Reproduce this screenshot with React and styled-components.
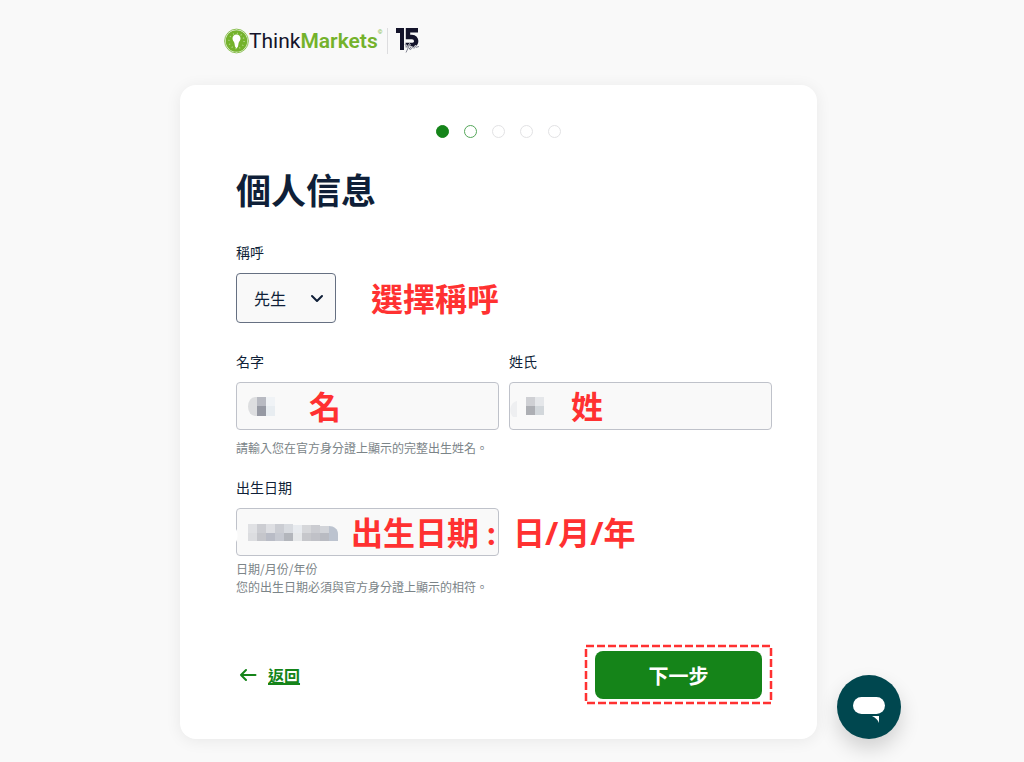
import React, {useState} from "react";

import styled, {createGlobalStyle} from "styled-components";

const colors = {
    page: "#f9f9f9",
    ink: "#0f1f38",
    muted: "#7b8488",
    green: "#158419",
    note: "#ff3131",
    chat: "#00474f",
};

const GlobalStyle = createGlobalStyle`
    * {
        box-sizing: border-box;
    }
    body {
        margin: 0;
        background: ${colors.page};
        color: ${colors.ink};
        font-family: "Noto Sans CJK TC", "Noto Sans", sans-serif;
    }
    input, select, button {
        font-family: inherit;
        color: inherit;
    }
`;

const Page = styled.div`
    padding: 0 27px 23px 0;
`;

const Column = styled.div`
    width: 100%;
    max-width: 637px;
    margin: 0 auto;
`;

const Header = styled.header`
    display: flex;
    align-items: center;
    height: 85px;
    padding: 0 44px 4px;
`;

const Brand = styled.a`
    display: flex;
    align-items: center;
    color: #14142b;
    font-family: Roboto, "Liberation Sans", sans-serif;
    font-size: 21px;
    font-weight: 400;
    line-height: 24px;
    text-decoration: none;
`;

const BrandAccent = styled.span`
    color: #74b22c;
    font-weight: 600;
`;

const BrandMark = styled.svg`
    width: 25px;
    height: 26px;
`;

const Registered = styled.sup`
    align-self: flex-start;
    color: #74b22c;
    font-size: 6px;
    line-height: 8px;
`;

const Anniversary = styled.svg`
    width: 24px;
    height: 28px;
    margin-left: 8px;
`;

const HeaderDivider = styled.span`
    width: 1px;
    height: 26px;
    margin-left: 5px;
    background: #dddddf;
`;

const Card = styled.main`
    padding: 40px 45px 35px 56px;
    border-radius: 16px;
    background: #ffffff;
    box-shadow: 0 2px 16px rgba(0, 0, 0, 0.07);
`;

const Steps = styled.ol`
    display: flex;
    justify-content: center;
    gap: 15px;
    margin: 0 11px 27px 0;
    padding: 0;
    list-style: none;
`;

const stepColors = {
    done: colors.green,
    current: "#55a75a",
    todo: "#e2e2e4",
};

const Step = styled.li`
    width: 13px;
    height: 13px;
    border: 1px solid ${({$state}) => stepColors[$state]};
    border-radius: 50%;
    background: ${({$state}) => ($state === "done" ? colors.green : "none")};
`;

const Title = styled.h1`
    margin: 0 0 29px;
    font-size: 35px;
    font-weight: 700;
    line-height: 48px;
`;

const Field = styled.div`
    min-width: 0;
`;

const FieldGrid = styled.div`
    display: grid;
    grid-template-columns: 1fr 1fr;
    gap: 10px;
    margin-top: ${({$top}) => $top}px;
`;

const Label = styled.label`
    display: block;
    margin-bottom: 11px;
    font-size: 14px;
    line-height: 20px;
`;

const SelectRow = styled.div`
    display: flex;
    align-items: center;
    gap: 35px;
`;

const SelectBox = styled.div`
    position: relative;
    width: 100px;
`;

const Select = styled.select`
    appearance: none;
    width: 100%;
    height: 50px;
    padding: 0 17px;
    border: 1px solid #667082;
    border-radius: 4px;
    background: ${colors.page};
    font-size: 16px;
`;

const Chevron = styled.svg`
    position: absolute;
    top: 19px;
    right: 12px;
    width: 14px;
    height: 12px;
    pointer-events: none;
`;

const InputBox = styled.div`
    position: relative;
`;

const Input = styled.input`
    display: block;
    width: 100%;
    height: 48px;
    padding: 0 12px;
    border: 1px solid #bfc2ca;
    border-radius: 4px;
    background: ${colors.page};
    font-size: 16px;
`;

const Note = styled.span`
    padding-top: 2px;
    color: ${colors.note};
    font-family: "Noto Sans", "Noto Sans CJK TC", sans-serif;
    font-size: 32px;
    font-weight: 700;
    line-height: 46px;
    white-space: nowrap;
`;

const OverlayNote = styled(Note)`
    position: absolute;
    top: 0;
    left: ${({$left}) => $left}px;
    pointer-events: none;
`;

const NoteColon = styled.span`
    display: inline-block;
    width: 34px;
    padding-left: 7px;
    font-family: Inter, sans-serif;
`;

const Mosaic = styled.svg`
    position: absolute;
    top: 15px;
    left: 0;
    height: 20px;
    width: 110px;
    pointer-events: none;
`;

const Hint = styled.p`
    margin: ${({$top}) => $top}px 0 0;
    color: ${colors.muted};
    font-size: 12px;
    line-height: 18px;
`;

const Actions = styled.div`
    display: flex;
    align-items: center;
    justify-content: space-between;
    margin-top: 49px;
`;

const BackLink = styled.a`
    display: flex;
    align-items: center;
    gap: 11px;
    padding-left: 3px;
    color: ${colors.green};
    font-size: 16px;
    font-weight: 700;
    line-height: 24px;
    text-decoration: none;
`;

const BackText = styled.span`
    text-decoration: underline;
    text-decoration-thickness: 2px;
    text-underline-offset: 1px;
`;

const NextFrame = styled.div`
    position: relative;
    padding: 6px 10px 5px;
`;

const DashedFrame = styled.svg`
    position: absolute;
    inset: 0;
    width: 100%;
    height: 100%;
    overflow: visible;
    pointer-events: none;
`;

const NextButton = styled.button`
    display: block;
    width: 167px;
    height: 48px;
    padding: 0;
    border: 0;
    border-radius: 8px;
    background: ${colors.green};
    color: #ffffff;
    font-size: 20px;
    font-weight: 700;
    cursor: pointer;
`;

const ChatButton = styled.button`
    position: fixed;
    right: 123px;
    bottom: 23px;
    width: 64px;
    height: 64px;
    padding: 0;
    border: 0;
    border-radius: 50%;
    background: ${colors.chat};
    box-shadow: 0 10px 20px rgba(0, 0, 0, 0.16);
    cursor: pointer;
`;

const steps = ["done", "current", "todo", "todo", "todo"];

// [x, y, width, height, colour]
const firstNameTiles = [
    [21, 0, 9, 9, "#b8bac2"],
    [21, 9, 9, 10, "#9699a3"],
    [30, 0, 9, 9, "#f0f3f6"],
    [30, 9, 9, 10, "#e8edf1"],
];

const lastNameTiles = [
    [17, 0, 9, 9, "#cfd0d4"],
    [17, 9, 9, 9, "#adafb4"],
    [26, 0, 9, 9, "#e5e7ea"],
    [26, 9, 9, 9, "#d2d7db"],
];

const birthDateTiles = [
    [12, 1, 9, 9, "#e0e1e4"],
    [12, 10, 9, 8, "#dcdde0"],
    [21, 1, 9, 9, "#cccdd2"],
    [21, 10, 9, 8, "#c5c6cb"],
    [30, 1, 9, 9, "#dedfe3"],
    [30, 10, 9, 8, "#b9bcc6"],
    [39, 1, 9, 9, "#cbcdd3"],
    [39, 10, 9, 8, "#c6c9d1"],
    [48, 1, 9, 9, "#d8dbe0"],
    [48, 10, 9, 8, "#b3b6bc"],
    [57, 2, 9, 8, "#e8ebef"],
    [57, 10, 9, 8, "#e6e8ea"],
    [66, 2, 9, 8, "#d6d7da"],
    [66, 10, 9, 8, "#c6c7cb"],
    [75, 2, 9, 8, "#cbccd1"],
    [75, 10, 9, 8, "#c0c1c7"],
    [84, 3, 9, 7, "#d2d4d9"],
    [84, 10, 9, 8, "#b9bbc2"],
];

function Tiles({tiles, children}) {
    return (
        <Mosaic viewBox="0 0 110 20" aria-hidden="true">
            {tiles.map(([x, y, width, height, fill]) => (
                <rect
                    key={`${x}-${y}`}
                    x={x}
                    y={y}
                    width={width}
                    height={height}
                    fill={fill}
                />
            ))}
            {children}
        </Mosaic>
    );
}

function Logo() {
    return (
        <Brand href="#" aria-label="ThinkMarkets">
            <BrandMark viewBox="0 0 25 26" aria-hidden="true">
                <circle cx="12.5" cy="13" r="11.9" fill="none" stroke="#8cc152" strokeWidth="1" />
                <circle cx="12.5" cy="13" r="10.8" fill="#74b22c" />
                <circle
                    cx="12.5"
                    cy="13"
                    r="7.6"
                    fill="none"
                    stroke="#b5d98d"
                    strokeWidth="1.4"
                    strokeDasharray="1 3"
                />
                <path
                    d="M12.5 6.6c-2.5 0-4 1.8-4 4 0 2 1.4 2.9 1.9 4.3l.6 3.7 1.5 1.8 1.5-1.8.6-3.7c.5-1.4 1.9-2.3 1.9-4.3 0-2.2-1.5-4-4-4z"
                    fill="#ffffff"
                />
            </BrandMark>
            <span>
                Think<BrandAccent>Markets</BrandAccent>
            </span>
            <Registered>©</Registered>
        </Brand>
    );
}

function AnniversaryMark() {
    return (
        <Anniversary viewBox="0 0 24 28" role="img" aria-label="15 Years">
            <path d="M0 1h8v22H4V6H0z" fill="#14142b" />
            <path
                d="M22 3.2H12v6.8h4c5.5 0 5.5 8 .5 8H9.500"
                fill="none"
                stroke="#14142b"
                strokeWidth="4.4"
            />
            <path
                d="M9 17l2 3.5 3-3.5-4 8.500M13 22c3-2 2-3 1-1s1 2 2 0 2 2 3-1 1 2 2 0l2-.5"
                fill="none"
                stroke="#f9f9f9"
                strokeWidth="1.8"
            />
            <path
                d="M9 17l2 3.5 3-3.5-4 8.500M13 22c3-2 2-3 1-1s1 2 2 0 2 2 3-1 1 2 2 0l2-.5"
                fill="none"
                stroke="#55566a"
                strokeWidth="0.7"
            />
        </Anniversary>
    );
}

export default function App() {
    const [title, setTitle] = useState("mr");

    return (
        <Page lang="zh-Hant">
            <GlobalStyle />
            <Column>
                <Header>
                    <Logo />
                    <HeaderDivider />
                    <AnniversaryMark />
                </Header>
                <Card>
                    <Steps>
                        {steps.map((state, index) => (
                            <Step key={index} $state={state} />
                        ))}
                    </Steps>
                    <Title>個人信息</Title>
                    <form onSubmit={(e) => e.preventDefault()}>
                        <Field>
                            <Label htmlFor="title">稱呼</Label>
                            <SelectRow>
                                <SelectBox>
                                    <Select
                                        id="title"
                                        value={title}
                                        onChange={(e) => setTitle(e.target.value)}
                                    >
                                        <option value="mr">先生</option>
                                    </Select>
                                    <Chevron viewBox="0 0 14 12" aria-hidden="true">
                                        <path
                                            d="M2 4l5 5 5-5"
                                            fill="none"
                                            stroke={colors.ink}
                                            strokeWidth="2"
                                            strokeLinecap="round"
                                            strokeLinejoin="round"
                                        />
                                    </Chevron>
                                </SelectBox>
                                <Note>選擇稱呼</Note>
                            </SelectRow>
                        </Field>
                        <FieldGrid $top={28}>
                            <Field>
                                <Label htmlFor="first-name">名字</Label>
                                <InputBox>
                                    <Input id="first-name" type="text" />
                                    <Tiles tiles={firstNameTiles}>
                                        <path d="M21 0h-2a7 9.5 0 0 0 0 19h2z" fill="#dddee0" />
                                    </Tiles>
                                    <OverlayNote $left={73}>名</OverlayNote>
                                </InputBox>
                            </Field>
                            <Field>
                                <Label htmlFor="last-name">姓氏</Label>
                                <InputBox>
                                    <Input id="last-name" type="text" />
                                    <Tiles tiles={lastNameTiles}>
                                        <path d="M8 4c-9 2-9 16 0 18z" fill="#eeeff1" />
                                    </Tiles>
                                    <OverlayNote $left={62}>姓</OverlayNote>
                                </InputBox>
                            </Field>
                        </FieldGrid>
                        <Hint $top={9}>請輸入您在官方身分證上顯示的完整出生姓名。</Hint>
                        <FieldGrid $top={20}>
                            <Field>
                                <Label htmlFor="birth-date">出生日期</Label>
                                <InputBox>
                                    <Input id="birth-date" type="text" />
                                    <Tiles tiles={birthDateTiles}>
                                        <path d="M93 3c5 0 9 3 9 8v7h-9z" fill="#bcc3cf" />
                                        <path d="M0 6c2 3 2 10 0 13z" fill="#ffffff" />
                                    </Tiles>
                                    <OverlayNote $left={115}>
                                        出生日期<NoteColon>:</NoteColon>日/月/年
                                    </OverlayNote>
                                </InputBox>
                            </Field>
                        </FieldGrid>
                        <Hint $top={4}>
                            日期/月份/年份
                            <br />
                            您的出生日期必須與官方身分證上顯示的相符。
                        </Hint>
                        <Actions>
                            <BackLink href="#">
                                <svg width="18" height="14" viewBox="0 0 18 14" aria-hidden="true">
                                    <path
                                        d="M16.5 7H2M7 2L2 7l5 5"
                                        fill="none"
                                        stroke={colors.green}
                                        strokeWidth="2"
                                        strokeLinecap="round"
                                        strokeLinejoin="round"
                                    />
                                </svg>
                                <BackText>返回</BackText>
                            </BackLink>
                            <NextFrame>
                                <NextButton type="submit">下一步</NextButton>
                                <DashedFrame aria-hidden="true">
                                    <rect
                                        x="1"
                                        y="1"
                                        width="185"
                                        height="57"
                                        fill="none"
                                        stroke={colors.note}
                                        strokeWidth="2.5"
                                        strokeDasharray="8 3"
                                    />
                                </DashedFrame>
                            </NextFrame>
                        </Actions>
                    </form>
                </Card>
            </Column>
            <ChatButton type="button" aria-label="Chat">
                <svg width="64" height="64" viewBox="0 0 64 64" aria-hidden="true">
                    <rect x="16" y="22" width="32" height="17" rx="8.5" fill="#ffffff" />
                    <path d="M35 41h7v7c-1-3-3-5-7-7z" fill="#ffffff" />
                </svg>
            </ChatButton>
        </Page>
    );
}
